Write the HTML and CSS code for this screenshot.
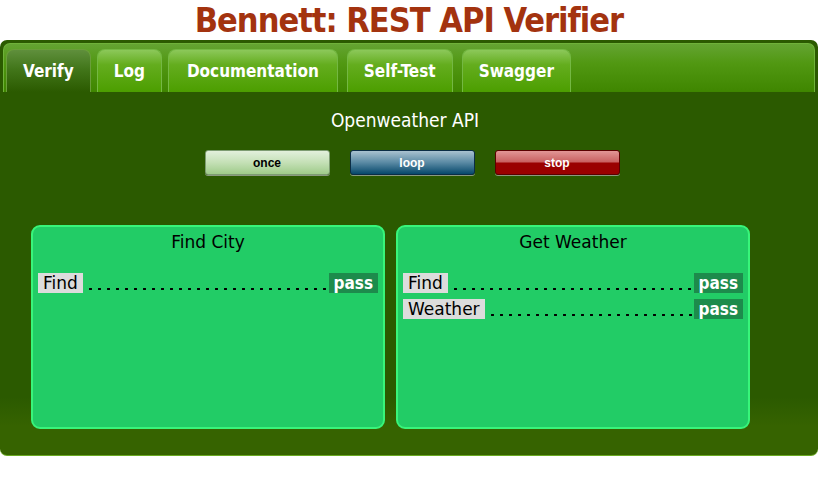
FILE: index.html
```html
<!DOCTYPE html>
<html>
<head>
<meta charset="utf-8">
<title>Bennett: REST API Verifier</title>
<link rel="stylesheet" href="styles.css">
</head>
<body>
<h1 class="title">Bennett: REST API Verifier</h1>
<div class="panel">
  <div class="tabbar">
    <div class="tab active">Verify</div>
    <div class="tab">Log</div>
    <div class="tab tab-wide">Documentation</div>
    <div class="tab">Self-Test</div>
    <div class="tab">Swagger</div>
  </div>
  <div class="content">
    <div class="api-name">Openweather API</div>
    <div class="buttons">
      <button class="btn btn-once">once</button>
      <button class="btn btn-loop">loop</button>
      <button class="btn btn-stop">stop</button>
    </div>
    <div class="cards">
      <div class="card">
        <div class="card-title">Find City</div>
        <div class="row"><span class="label">Find</span><span class="dots"></span><span class="status">pass</span></div>
      </div>
      <div class="card">
        <div class="card-title">Get Weather</div>
        <div class="row"><span class="label">Find</span><span class="dots"></span><span class="status">pass</span></div>
        <div class="row"><span class="label">Weather</span><span class="dots"></span><span class="status">pass</span></div>
      </div>
    </div>
  </div>
</div>
</body>
</html>
```
FILE: styles.css
```css
html, body {
  margin: 0;
  padding: 0;
  background: #ffffff;
}
body {
  width: 818px;
  font-family: "DejaVu Sans", sans-serif;
}
.title {
  margin: 0;
  height: 40px;
  line-height: 40px;
  text-align: center;
  font-family: "DejaVu Sans Condensed", "DejaVu Sans", sans-serif;
  font-weight: bold;
  font-size: 34px;
  color: #a3330f;
  letter-spacing: -1px;
}
.panel {
  width: 818px;
  height: 416px;
  box-sizing: border-box;
  border-radius: 7px;
  background: linear-gradient(to bottom, #2b5a00 0%, #2b5a00 86%, #366300 93%, #366300 100%);
  border-bottom: 1px solid #6aaa22;
  padding: 3px 3px 0 3px;
  display: flex;
  flex-direction: column;
}
.tabbar {
  height: 49px;
  box-sizing: border-box;
  border: 1px solid #6fb23a;
  border-bottom: none;
  border-radius: 7px 7px 0 0;
  background: linear-gradient(to bottom, #64a432 0%, #519812 40%, #3f8600 100%);
  display: flex;
  align-items: flex-end;
  padding-left: 2px;
  gap: 6px;
}
.tab {
  height: 43px;
  box-sizing: border-box;
  padding: 0 16px;
  display: flex;
  align-items: center;
  border: 1px solid #74b843;
  border-bottom: none;
  border-radius: 8px 8px 0 0;
  background: linear-gradient(to bottom, #8cc85a 0%, #64ad1e 35%, #4c9e00 100%);
  color: #ffffff;
  font-family: "DejaVu Sans Condensed", "DejaVu Sans", sans-serif;
  font-weight: bold;
  font-size: 17px;
}
.tab-wide {
  padding: 0 18px;
}
.tab:nth-child(3), .tab:nth-child(4) {
  margin-right: 3px;
}
.tab.active {
  background: linear-gradient(to bottom, #5f8f3c 0%, #42761a 45%, #2b5a00 100%);
  border-color: #6a9e3a;
}
.content {
  flex: 1;
  display: flex;
  flex-direction: column;
}
.api-name {
  margin-top: 16px;
  height: 24px;
  line-height: 24px;
  text-align: center;
  color: #ffffff;
  font-family: "DejaVu Sans Condensed", "DejaVu Sans", sans-serif;
  font-size: 19px;
  padding-right: 8px;
}
.buttons {
  margin-top: 18px;
  display: flex;
  justify-content: center;
  gap: 20px;
  padding-left: 6px;
}
.btn {
  width: 125px;
  height: 25px;
  border-radius: 3px;
  font-family: "Liberation Sans", Arial, sans-serif;
  font-weight: bold;
  font-size: 12px;
  padding: 0;
  box-shadow: 0 1px 0 #8a9a80;
}
.btn-once {
  border: 1px solid #7d9c72;
  background: linear-gradient(to bottom, #e2f0dc 0%, #c4e0b6 50%, #9fcb8a 100%);
  color: #000000;
}
.btn-loop {
  border: 1px solid #0b2d45;
  background: linear-gradient(to bottom, #a9c2d0 0%, #5a8aa4 50%, #06486b 100%);
  color: #ffffff;
}
.btn-stop {
  border: 1px solid #5a0000;
  background: linear-gradient(to bottom, #e29696 0%, #c96060 48%, #9a0000 52%, #9a0000 100%);
  color: #ffffff;
}
.cards {
  margin-top: 50px;
  display: flex;
  gap: 11px;
  padding-left: 28px;
}
.card {
  width: 354px;
  height: 204px;
  box-sizing: border-box;
  background: #22cc66;
  border: 2px solid #38f57a;
  border-radius: 9px;
  padding: 5px 5px 0 5px;
}
.card-title {
  height: 20px;
  line-height: 20px;
  text-align: center;
  font-size: 17px;
  color: #000000;
  margin-bottom: 21px;
}
.row {
  display: flex;
  height: 20px;
  margin-bottom: 6px;
  font-size: 17px;
  line-height: 20px;
}
.label {
  background: #dcdcdc;
  color: #000000;
  padding: 0 5px;
}
.dots {
  flex: 1;
  background-image: radial-gradient(circle, #000000 1.1px, transparent 1.5px);
  background-size: 9px 4px;
  background-repeat: repeat-x;
  background-position: 3px 14px;
}
.status {
  background: #1d8b4c;
  color: #ffffff;
  font-family: "DejaVu Sans Condensed", "DejaVu Sans", sans-serif;
  font-weight: bold;
  padding: 0 5px;
}
```
